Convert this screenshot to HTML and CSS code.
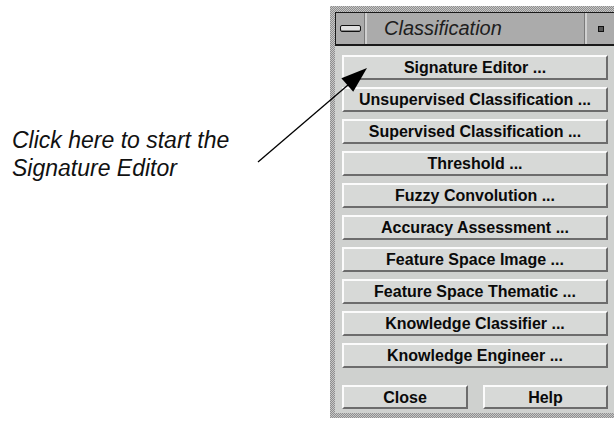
FILE: index.html
```html
<!DOCTYPE html>
<html>
<head>
<meta charset="utf-8">
<link rel="stylesheet" href="styles.css">
</head>
<body>
<div class="page">
  <div class="note">
    <p class="caption">Click here to start the<br>Signature Editor</p>
  </div>
  <div class="window">
    <div class="titlebar">
      <div class="menu-btn"><span class="bar"></span></div>
      <div class="title">Classification</div>
      <div class="min-btn"><span class="dot"></span></div>
    </div>
    <div class="content">
      <div class="btn-list">
        <button class="btn">Signature Editor ...</button>
        <button class="btn">Unsupervised Classification ...</button>
        <button class="btn">Supervised Classification ...</button>
        <button class="btn">Threshold ...</button>
        <button class="btn">Fuzzy Convolution ...</button>
        <button class="btn">Accuracy Assessment ...</button>
        <button class="btn">Feature Space Image ...</button>
        <button class="btn">Feature Space Thematic ...</button>
        <button class="btn">Knowledge Classifier ...</button>
        <button class="btn">Knowledge Engineer ...</button>
      </div>
      <div class="btn-row">
        <button class="btn btn-close">Close</button>
        <button class="btn btn-help">Help</button>
      </div>
    </div>
  </div>
  <svg class="arrow" width="614" height="423" viewBox="0 0 614 423">
    <line x1="258" y1="162" x2="348" y2="85" stroke="#000" stroke-width="1.3"/>
    <polygon points="367,68 353.2,91.8 341.4,78.2" fill="#000"/>
  </svg>
</div>
</body>
</html>
```
FILE: styles.css
```css
html, body {
  margin: 0;
  padding: 0;
  background: #ffffff;
}

.page {
  position: relative;
  width: 614px;
  height: 423px;
  overflow: hidden;
  display: flex;
  align-items: flex-start;
}

.note {
  width: 330px;
  flex: 0 0 330px;
}

.caption {
  margin: 126px 0 0 12px;
  font-family: "Liberation Sans", Arial, sans-serif;
  font-style: italic;
  font-size: 23px;
  line-height: 28px;
  color: #111;
}

.window {
  flex: 0 0 auto;
  width: 290px;
  margin-top: 6px;
  padding: 6px 5px 5px 5px;
  background-color: #b4b4b4;
  background-image: repeating-conic-gradient(#8e8e8e 0 25%, #c6c6c6 0 50%);
  background-size: 2px 2px;
  box-sizing: border-box;
}

.titlebar {
  display: flex;
  height: 34px;
  box-sizing: border-box;
  border-top: 1px solid #1a1a1a;
  border-bottom: 2px solid #1a1a1a;
  border-left: 1px solid #1a1a1a;
  background: #ababab;
}

.menu-btn {
  width: 29px;
  flex: 0 0 29px;
  display: flex;
  align-items: center;
  justify-content: center;
  border-right: 2px solid #d0d0d0;
  box-shadow: inset -1px 0 0 #7a7a7a;
}

.bar {
  display: block;
  width: 19px;
  height: 5px;
  border: 1px solid #111;
  border-radius: 2px;
  background: #e0e0e0;
  box-shadow: inset 0 -1px 0 #888;
}

.title {
  flex: 1 1 auto;
  padding-left: 17px;
  font-family: "Liberation Sans", Arial, sans-serif;
  font-style: italic;
  font-size: 20px;
  line-height: 31px;
  color: #1e1e1e;
  border-right: 2px solid #d0d0d0;
  box-shadow: inset -1px 0 0 #7a7a7a;
}

.min-btn {
  width: 28px;
  flex: 0 0 28px;
  display: flex;
  align-items: center;
  justify-content: center;
}

.dot {
  display: block;
  width: 4px;
  height: 4px;
  border: 1px solid #111;
  background: #555;
}

.content {
  background: #cfd1cf;
  padding: 9px 7px 4px 7px;
}

.btn-list {
  display: flex;
  flex-direction: column;
  gap: 7px;
  width: 266px;
}

.btn {
  display: block;
  height: 25px;
  margin: 0;
  padding: 0;
  box-sizing: border-box;
  background: #d7d9d7;
  border-style: solid;
  border-width: 2px;
  border-color: #fbfbfb #6c6c6c #6c6c6c #fbfbfb;
  font-family: "Liberation Sans", Arial, sans-serif;
  font-weight: bold;
  font-size: 16px;
  line-height: 21px;
  color: #0a0a0a;
  text-align: center;
  cursor: pointer;
}

.btn-row {
  display: flex;
  gap: 15px;
  width: 266px;
  margin-top: 17px;
}

.btn-close {
  width: 126px;
  height: 24px;
}

.btn-help {
  width: 125px;
  height: 24px;
}

.arrow {
  position: absolute;
  left: 0;
  top: 0;
  pointer-events: none;
}
```
